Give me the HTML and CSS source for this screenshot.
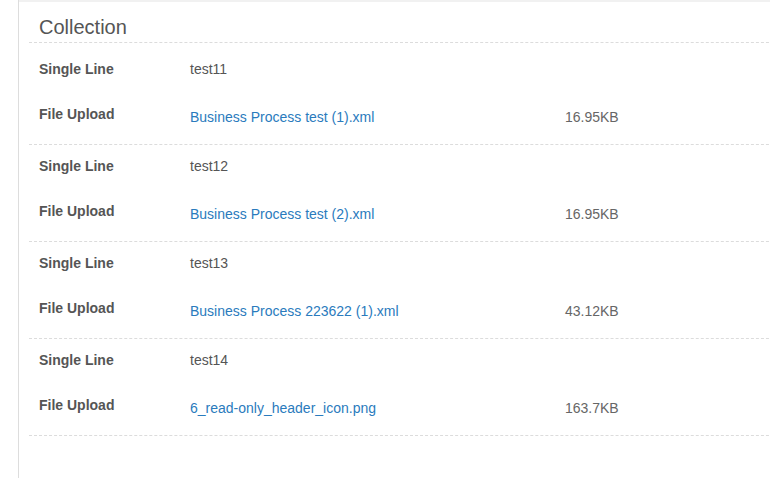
FILE: index.html
```html
<!DOCTYPE html>
<html>
<head>
<meta charset="utf-8">
<link rel="stylesheet" href="styles.css">
</head>
<body>
<div class="page">
  <div class="rail"></div>
  <div class="main">
    <div class="panel">
      <h2 class="title">Collection</h2>
      <div class="group first">
        <div class="row"><div class="label">Single Line</div><div class="value">test11</div></div>
        <div class="row file"><div class="label">File Upload</div><a class="link" href="#">Business Process test (1).xml</a><div class="size">16.95KB</div></div>
      </div>
      <div class="group">
        <div class="row"><div class="label">Single Line</div><div class="value">test12</div></div>
        <div class="row file"><div class="label">File Upload</div><a class="link" href="#">Business Process test (2).xml</a><div class="size">16.95KB</div></div>
      </div>
      <div class="group">
        <div class="row"><div class="label">Single Line</div><div class="value">test13</div></div>
        <div class="row file"><div class="label">File Upload</div><a class="link" href="#">Business Process 223622 (1).xml</a><div class="size">43.12KB</div></div>
      </div>
      <div class="group">
        <div class="row"><div class="label">Single Line</div><div class="value">test14</div></div>
        <div class="row file"><div class="label">File Upload</div><a class="link" href="#">6_read-only_header_icon.png</a><div class="size">163.7KB</div></div>
      </div>
    </div>
  </div>
</div>
</body>
</html>
```
FILE: styles.css
```css
html, body {
  margin: 0;
  padding: 0;
  background: #fff;
  font-family: "Liberation Sans", Arial, sans-serif;
  color: #555;
}
.page {
  display: flex;
  height: 478px;
  overflow: hidden;
}
.rail {
  width: 18px;
  flex: 0 0 18px;
  border-right: 1px solid #dddddd;
}
.main {
  flex: 1;
  border-top: 2px solid #f1f1f1;
  padding-left: 10px;
  min-width: 0;
}
.panel {
  width: 760px;
}
.title {
  margin: 0;
  padding: 14px 0 4px 10px;
  font-size: 20px;
  line-height: 22px;
  font-weight: normal;
  color: #555;
  border-bottom: 1px dashed #dcdcdc;
}
.group {
  padding: 11px 0 20px 10px;
  border-bottom: 1px dashed #dcdcdc;
  display: flex;
  flex-direction: column;
  gap: 25px;
}
.group.first {
  padding-top: 16px;
}
.row {
  display: grid;
  grid-template-columns: 151px 375px auto;
  font-size: 14px;
  line-height: 20px;
  height: 20px;
}
.label {
  font-weight: bold;
  color: #555;
}
.value {
  color: #555;
}
.file .link,
.file .size {
  padding-top: 3px;
}
.link {
  color: #2a7bbd;
  text-decoration: none;
}
.size {
  color: #666;
}
```
